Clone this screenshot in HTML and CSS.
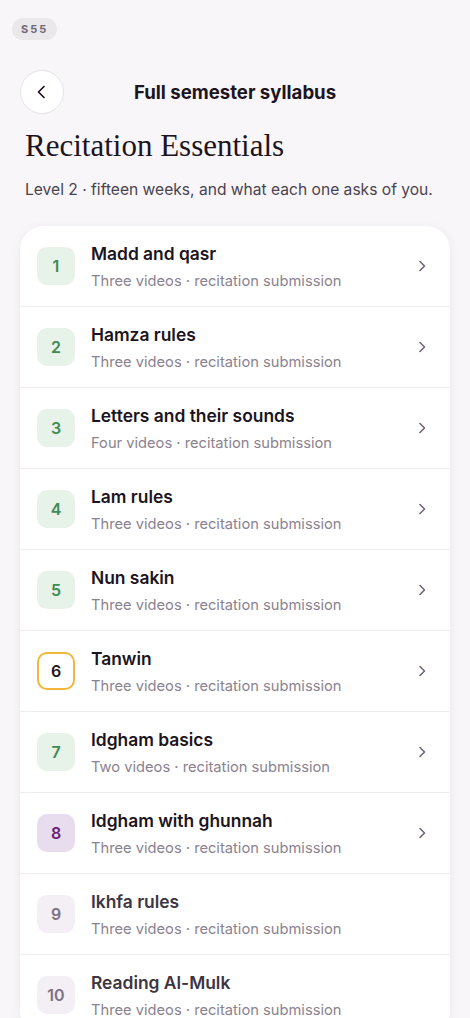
FILE: index.html
```html
<!DOCTYPE html>
<html>
	<head>
		<meta charset="utf-8">
		<title>Full semester syllabus</title>
		<link rel="stylesheet" href="styles.css">
	</head>
	<body>
		<div class="page">
			<!-- 状态标签 -->
			<div class="status"><span class="pill">S55</span></div>

			<!-- 顶部栏 -->
			<div class="topbar">
				<button class="back">
					<svg width="18" height="18" viewBox="0 0 18 18"><path d="M11 3.5L5.5 9l5.5 5.5" fill="none" stroke="#1c1420" stroke-width="1.7" stroke-linecap="round" stroke-linejoin="round"/></svg>
				</button>
				<h1 class="bar-title">Full semester syllabus</h1>
				<span></span>
			</div>

			<h2 class="course">Recitation Essentials</h2>
			<p class="lead">Level 2 · fifteen weeks, and what each one asks of you.</p>

			<!-- 周列表 -->
			<ul class="weeks">
				<li class="week">
					<span class="num done">1</span>
					<div class="info"><div class="name">Madd and qasr</div><div class="meta">Three videos · recitation submission</div></div>
					<svg class="chev" width="16" height="16" viewBox="0 0 16 16"><path d="M6 3.5l4.5 4.5L6 12.5"/></svg>
				</li>
				<li class="week">
					<span class="num done">2</span>
					<div class="info"><div class="name">Hamza rules</div><div class="meta">Three videos · recitation submission</div></div>
					<svg class="chev" width="16" height="16" viewBox="0 0 16 16"><path d="M6 3.5l4.5 4.5L6 12.5"/></svg>
				</li>
				<li class="week">
					<span class="num done">3</span>
					<div class="info"><div class="name">Letters and their sounds</div><div class="meta">Four videos · recitation submission</div></div>
					<svg class="chev" width="16" height="16" viewBox="0 0 16 16"><path d="M6 3.5l4.5 4.5L6 12.5"/></svg>
				</li>
				<li class="week">
					<span class="num done">4</span>
					<div class="info"><div class="name">Lam rules</div><div class="meta">Three videos · recitation submission</div></div>
					<svg class="chev" width="16" height="16" viewBox="0 0 16 16"><path d="M6 3.5l4.5 4.5L6 12.5"/></svg>
				</li>
				<li class="week">
					<span class="num done">5</span>
					<div class="info"><div class="name">Nun sakin</div><div class="meta">Three videos · recitation submission</div></div>
					<svg class="chev" width="16" height="16" viewBox="0 0 16 16"><path d="M6 3.5l4.5 4.5L6 12.5"/></svg>
				</li>
				<li class="week">
					<span class="num current">6</span>
					<div class="info"><div class="name">Tanwin</div><div class="meta">Three videos · recitation submission</div></div>
					<svg class="chev" width="16" height="16" viewBox="0 0 16 16"><path d="M6 3.5l4.5 4.5L6 12.5"/></svg>
				</li>
				<li class="week">
					<span class="num done">7</span>
					<div class="info"><div class="name">Idgham basics</div><div class="meta">Two videos · recitation submission</div></div>
					<svg class="chev" width="16" height="16" viewBox="0 0 16 16"><path d="M6 3.5l4.5 4.5L6 12.5"/></svg>
				</li>
				<li class="week">
					<span class="num review">8</span>
					<div class="info"><div class="name">Idgham with ghunnah</div><div class="meta">Three videos · recitation submission</div></div>
					<svg class="chev" width="16" height="16" viewBox="0 0 16 16"><path d="M6 3.5l4.5 4.5L6 12.5"/></svg>
				</li>
				<li class="week locked">
					<span class="num">9</span>
					<div class="info"><div class="name">Ikhfa rules</div><div class="meta">Three videos · recitation submission</div></div>
				</li>
				<li class="week locked">
					<span class="num">10</span>
					<div class="info"><div class="name">Reading Al-Mulk</div><div class="meta">Three videos · recitation submission</div></div>
				</li>
			</ul>
		</div>
	</body>
</html>
```

FILE: styles.css
```css
* {
	margin: 0;
	padding: 0;
	box-sizing: border-box;
}
body {
	background: #f8f6f9;
	font-family: Inter, "Noto Sans", sans-serif;
	color: #1c1420;
}
.page {
	padding-bottom: 40px;
}
.status {
	padding: 17px 12px 0;
	height: 70px;
}
.pill {
	display: inline-block;
	height: 22px;
	line-height: 22px;
	padding: 0 9px;
	border-radius: 11px;
	background: #ebe8ec;
	color: #6f6875;
	font-size: 11px;
	font-weight: 700;
	letter-spacing: 2px;
}
.topbar {
	display: grid;
	grid-template-columns: 44px 1fr 44px;
	align-items: center;
	padding: 0 20px;
	height: 44px;
}
.back {
	width: 44px;
	height: 44px;
	border-radius: 50%;
	border: 1px solid #e8e3ea;
	background: #fff;
	display: flex;
	align-items: center;
	justify-content: center;
}
.bar-title {
	text-align: center;
	font-size: 18.6px;
	font-weight: 700;
}
.course {
	margin: 12px 25px 0;
	font-family: "Liberation Serif", "DejaVu Serif", serif;
	font-weight: 400;
	font-size: 31px;
	line-height: 40px;
	color: #1c1420;
}
.lead {
	margin: 12px 25px 0;
	font-size: 15.6px;
	line-height: 24px;
	color: #4a4350;
}
.weeks {
	list-style: none;
	margin: 24px 20px 0;
	background: #fff;
	border-radius: 24px;
	box-shadow: 0 2px 12px rgba(70, 40, 90, 0.06);
	overflow: hidden;
}
.week {
	display: flex;
	align-items: center;
	height: 81px;
	padding: 0 20px 0 17px;
	border-top: 1px solid #f0edf1;
}
.week:first-child {
	border-top: none;
	height: 80px;
}
.num {
	flex: none;
	width: 38px;
	height: 38px;
	border-radius: 10px;
	display: flex;
	align-items: center;
	justify-content: center;
	font-size: 16px;
	font-weight: 600;
	background: #f3eff5;
	color: #7b7381;
}
.num.done {
	background: #e7f2e9;
	color: #3f8a55;
}
.num.current {
	background: #fff;
	border: 2px solid #f0b73a;
	color: #1c1420;
}
.num.review {
	background: #e8ddef;
	color: #6a1f7a;
}
.info {
	flex: 1;
	margin-left: 16px;
}
.name {
	font-size: 17.4px;
	font-weight: 600;
	line-height: 24px;
	color: #1c1420;
}
.meta {
	margin-top: 5px;
	font-size: 14.7px;
	line-height: 20px;
	color: #8b8290;
}
.locked .name {
	color: #3d3642;
}
.chev {
	flex: none;
}
.chev path {
	fill: none;
	stroke: #6e6478;
	stroke-width: 1.6;
	stroke-linecap: round;
	stroke-linejoin: round;
}
```
